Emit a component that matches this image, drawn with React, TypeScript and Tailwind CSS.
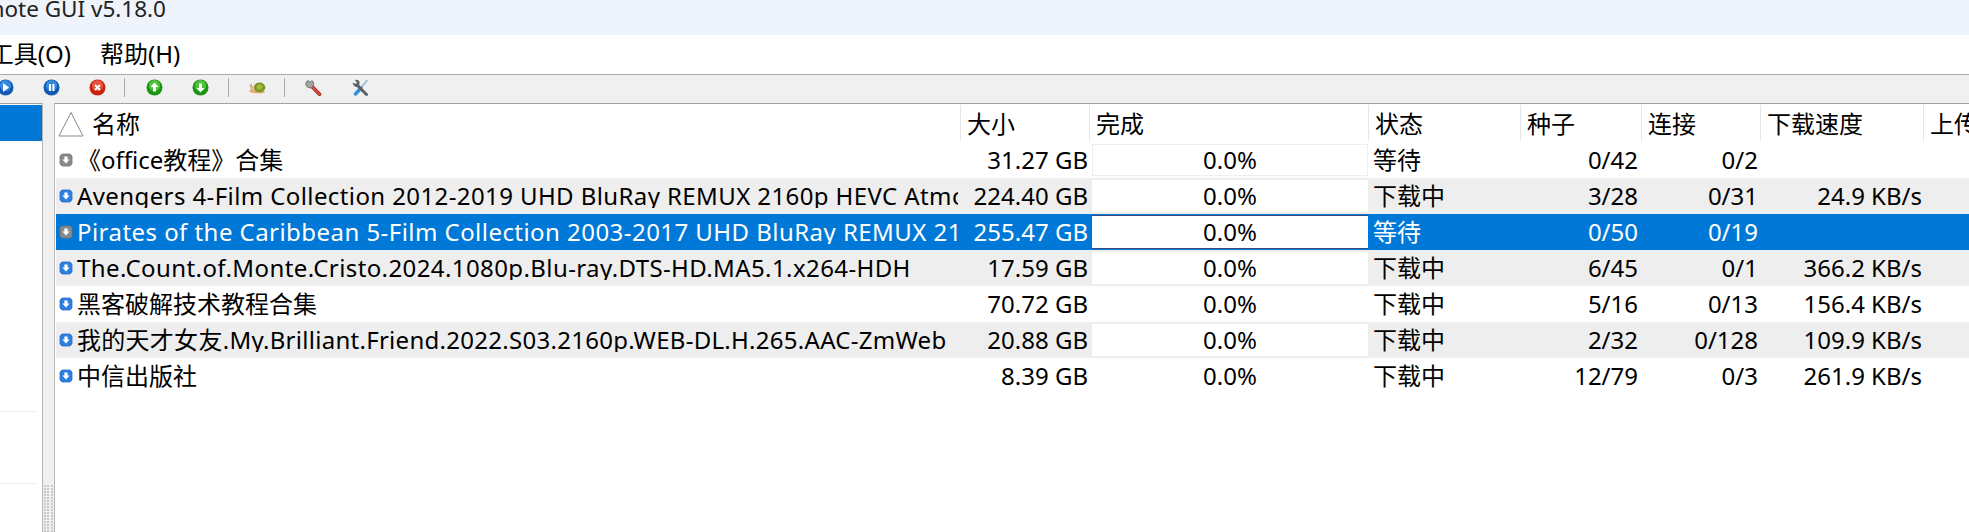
const font = "[font-family:'Noto_Sans','Noto_Sans_CJK_SC',sans-serif]";

type Row = {
  name: string;
  spacing: string;
  size: string;
  status: string;
  seeds: string;
  peers: string;
  down: string;
  active: boolean;
};

const rows: Row[] = [
  { name: "《office教程》合集", spacing: "", size: "31.27 GB", status: "等待", seeds: "0/42", peers: "0/2", down: "", active: false },
  { name: "Avengers 4-Film Collection 2012-2019 UHD BluRay REMUX 2160p HEVC Atmos-CHD", spacing: "tracking-[0.4px]", size: "224.40 GB", status: "下载中", seeds: "3/28", peers: "0/31", down: "24.9 KB/s", active: true },
  { name: "Pirates of the Caribbean 5-Film Collection 2003-2017 UHD BluRay REMUX 2160p HEVC", spacing: "tracking-[0.45px]", size: "255.47 GB", status: "等待", seeds: "0/50", peers: "0/19", down: "", active: false },
  { name: "The.Count.of.Monte.Cristo.2024.1080p.Blu-ray.DTS-HD.MA5.1.x264-HDH", spacing: "tracking-[0.4px]", size: "17.59 GB", status: "下载中", seeds: "6/45", peers: "0/1", down: "366.2 KB/s", active: true },
  { name: "黑客破解技术教程合集", spacing: "", size: "70.72 GB", status: "下载中", seeds: "5/16", peers: "0/13", down: "156.4 KB/s", active: true },
  { name: "我的天才女友.My.Brilliant.Friend.2022.S03.2160p.WEB-DL.H.265.AAC-ZmWeb", spacing: "tracking-[0.28px]", size: "20.88 GB", status: "下载中", seeds: "2/32", peers: "0/128", down: "109.9 KB/s", active: true },
  { name: "中信出版社", spacing: "", size: "8.39 GB", status: "下载中", seeds: "12/79", peers: "0/3", down: "261.9 KB/s", active: true },
];

function StateIcon({ active }: { active: boolean }) {
  const fill = active ? "#2f7fe0" : "#8a8a8a";
  return (
    <svg width="14" height="14" viewBox="0 0 14 14" className="shrink-0">
      <path d="M3 1h8l2 2v8l-2 2H3l-2-2V3z" fill={fill} stroke={active ? "#2a6fc9" : "#777"} strokeWidth="0.8" />
      <path d="M5.4 3.4h3.2v3h2L7 10.4 3.4 6.4h2z" fill="#fff" />
    </svg>
  );
}

function Ball({ from, to, children }: { from: string; to: string; children: React.ReactNode }) {
  return (
    <svg width="17" height="17" viewBox="0 0 17 17">
      <circle cx="8.5" cy="8.5" r="8" fill={to} />
      <circle cx="8.5" cy="6.5" r="5.6" fill={from} opacity="0.75" />
      {children}
    </svg>
  );
}

function Sep() {
  return <div className="w-px h-[19px] bg-[#a8a8a8]" />;
}

function Toolbar() {
  return (
    <div className="h-[29px] shrink-0 flex items-center pb-[3px] border-t border-[#a9a9a9] bg-[#f0f0f0] overflow-hidden">
      <div className="-ml-[3px] flex items-center">
        <Ball from="#3f9bec" to="#1458b4">
          <path d="M6 4l6 4.5L6 13z" fill="#fff" />
        </Ball>
        <div className="ml-[29px]">
          <Ball from="#3f9bec" to="#1458b4">
            <path d="M6 5h2v7H6zM9.4 5h2v7h-2z" fill="#fff" />
          </Ball>
        </div>
        <div className="ml-[29px]">
          <Ball from="#f0644a" to="#c62410">
            <path d="M6 6l5 5M11 6l-5 5" stroke="#fff" strokeWidth="1.8" />
          </Ball>
        </div>
        <div className="ml-[18px]">
          <Sep />
        </div>
        <div className="ml-[21px]">
          <Ball from="#62d04c" to="#1c9414">
            <path d="M8.5 3.5l4 4.5H10v4.5H7V8H4.5z" fill="#fff" />
          </Ball>
        </div>
        <div className="ml-[29px]">
          <Ball from="#62d04c" to="#1c9414">
            <path d="M8.5 13.5l4-4.5H10V4.5H7V9H4.5z" fill="#fff" />
          </Ball>
        </div>
        <div className="ml-[19px]">
          <Sep />
        </div>
        <svg width="17" height="14" viewBox="0 0 17 14" className="ml-[20px]">
          <path d="M0.5 10.5c1.5 2 10 2.5 16 1l-3-2H5L3.5 7H2z" fill="#eaa877" />
          <path d="M3.5 7L2 2.5M2.5 7L0.5 4" stroke="#d98a52" strokeWidth="1" />
          <ellipse cx="10.5" cy="6.5" rx="5.8" ry="5" fill="#7d9a24" />
          <ellipse cx="10.5" cy="6" rx="2.8" ry="2.4" fill="#a4bd3c" />
        </svg>
        <div className="ml-[18px]">
          <Sep />
        </div>
        <svg width="17" height="17" viewBox="0 0 17 17" className="ml-[20px]">
          <path d="M6.5 7l8 8.2" stroke="#8e241c" strokeWidth="3.6" strokeLinecap="round" />
          <path d="M6.5 7l8 8.2" stroke="#e2493a" strokeWidth="2.2" strokeLinecap="round" />
          <path d="M1.5 2.6a4 4 0 1 0 5.6-1L5 3.2 3.4 1.4z" fill="#a2a2a2" stroke="#6a6a6a" strokeWidth="0.8" />
        </svg>
        <svg width="17" height="17" viewBox="0 0 17 17" className="ml-[30px]">
          <path d="M15 1.5L8 10" stroke="#9bb7cc" strokeWidth="1.6" strokeLinecap="round" />
          <path d="M9 9L3.5 15" stroke="#2f8fd8" strokeWidth="3.4" strokeLinecap="round" />
          <path d="M5.5 6.5l9 9" stroke="#56616c" strokeWidth="3" strokeLinecap="round" />
          <path d="M0.8 3.5c0 3 3 5.5 6.2 4.2L7.6 3C7 1 4.5 0.5 2.8 1L5 3.6 3.6 5z" fill="#56616c" />
        </svg>
      </div>
    </div>
  );
}

function Sidebar() {
  return (
    <div className="w-[42px] shrink-0 bg-white border-t border-[#a0a0a0] flex flex-col">
      <div className="h-px" />
      <div className="h-[36px] bg-[#0078d7]" />
      <div className="h-[270px]" />
      <div className="h-px w-[36px] bg-[#eeeeee]" />
      <div className="h-[71px]" />
      <div className="h-px w-[36px] bg-[#eeeeee]" />
    </div>
  );
}

function Splitter() {
  return (
    <div className="w-[13px] shrink-0 bg-[#f0f0f0] border-x border-[#b5b5b5] flex flex-col justify-end">
      <div className="grid grid-cols-3 gap-x-[1px] gap-y-[1px] px-[1px]">
        {Array.from({ length: 48 }).map((_, i) => (
          <div key={i} className="w-[2px] h-[2px] bg-[#c8c8c8]" />
        ))}
      </div>
    </div>
  );
}

function HeaderCell({ w, children }: { w: string; children: React.ReactNode }) {
  return (
    <div className={`${w} shrink-0 h-[36px] border-r border-[#e5e5e5] flex items-center pl-[6px] pt-[2px] whitespace-nowrap overflow-hidden`}>
      {children}
    </div>
  );
}

function TorrentRow({ row, index }: { row: Row; index: number }) {
  const selected = index === 2;
  const stripe = index % 2 === 1;
  const rowCls = selected ? "bg-[#0078d7] text-white" : stripe ? "bg-[#eeeeee] text-black" : "bg-white text-black";
  return (
    <div className={`${rowCls} ml-px h-[36px] flex items-center whitespace-nowrap`}>
      <div className="w-[902px] shrink-0 flex items-center pl-[3px] overflow-hidden">
        <StateIcon active={row.active} />
        <span className={`ml-[4px] ${row.spacing}`}>{row.name}</span>
      </div>
      <div className="w-[134px] shrink-0 text-right pr-[4px]">{row.size}</div>
      <div className={`w-[276px] h-full shrink-0 text-black ${selected ? "py-px" : "py-[2px]"}`}>
        <div className={`h-full bg-white flex items-center justify-center ${selected ? "border-y border-[#3a4a78]" : index === 0 ? "border border-[#eeeeee]" : ""}`}>
          0.0%
        </div>
      </div>
      <div className="w-[153px] shrink-0 pl-[5px]">{row.status}</div>
      <div className="w-[121px] shrink-0 text-right pr-[4px]">{row.seeds}</div>
      <div className="w-[119px] shrink-0 text-right pr-[3px]">{row.peers}</div>
      <div className="w-[163px] shrink-0 text-right pr-[2px]">{row.down}</div>
    </div>
  );
}

export default function App() {
  return (
    <div className={`w-[1969px] h-[532px] overflow-hidden flex flex-col bg-white text-black text-[24px] leading-none ${font}`}>
      <div className="h-[35px] shrink-0 bg-[#eff3fb] overflow-hidden">
        <div className="w-[166px] flex justify-end whitespace-nowrap -mt-[3px] text-[22.5px] leading-[24px] text-[#222]">
          Transmission Remote GUI v5.18.0
        </div>
      </div>
      <div className="h-[39px] shrink-0 bg-white flex items-center pb-px overflow-hidden">
        <div className="w-[71px] shrink-0 flex justify-end whitespace-nowrap">工具(O)</div>
        <div className="ml-[29px] whitespace-nowrap">帮助(H)</div>
      </div>
      <Toolbar />
      <div className="flex-1 flex min-h-0 bg-[#f0f0f0]">
        <Sidebar />
        <Splitter />
        <div className="flex-1 bg-white border-t border-[#a0a0a0] overflow-hidden">
          <div className="flex h-[38px] items-center">
            <HeaderCell w="w-[906px]">
              <svg width="26" height="26" viewBox="0 0 26 26" className="-ml-[3px] mr-[8px] shrink-0">
                <path d="M13 1.5L1 25h24z" fill="none" stroke="#8a8a8a" />
              </svg>
              名称
            </HeaderCell>
            <HeaderCell w="w-[129px]">大小</HeaderCell>
            <HeaderCell w="w-[279px]">完成</HeaderCell>
            <HeaderCell w="w-[152px]">状态</HeaderCell>
            <HeaderCell w="w-[121px]">种子</HeaderCell>
            <HeaderCell w="w-[119px]">连接</HeaderCell>
            <HeaderCell w="w-[163px]">下载速度</HeaderCell>
            <HeaderCell w="w-[60px]">上传速度</HeaderCell>
          </div>
          {rows.map((row, i) => (
            <TorrentRow key={row.name} row={row} index={i} />
          ))}
        </div>
      </div>
    </div>
  );
}
